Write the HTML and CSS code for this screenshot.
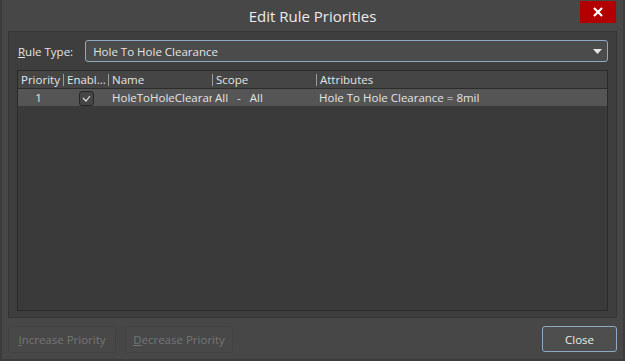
FILE: index.html
```html
<!DOCTYPE html>
<html lang="en">
<head>
  <meta charset="UTF-8">
  <title>Edit Rule Priorities</title>
  <link rel="stylesheet" href="styles.css">
</head>
<body>
  <div class="window">
    <div class="titlebar">
      <span></span>
      <div class="title">Edit Rule Priorities</div>
      <div class="close-x">
        <svg width="10" height="10" viewBox="0 0 10 10"><path d="M1 1 L9 9 M9 1 L1 9" stroke="#fff" stroke-width="2.2"/></svg>
      </div>
    </div>

    <div class="panel">
      <div class="rule-row">
        <label><u>R</u>ule Type:</label>
        <div class="select">
          <span>Hole To Hole Clearance</span>
          <svg width="9" height="5" viewBox="0 0 9 5"><path d="M0 0 H9 L4.5 5 Z" fill="#e8e8e8"/></svg>
        </div>
      </div>

      <div class="grid">
        <div class="row head">
          <div class="cell c-pri">Priority</div>
          <div class="cell c-en sep">Enabl...</div>
          <div class="cell c-name sep">Name</div>
          <div class="cell c-scope sep">Scope</div>
          <div class="cell c-attr sep">Attributes</div>
        </div>
        <div class="row sel">
          <div class="cell c-pri num">1</div>
          <div class="cell c-en">
            <span class="check">
              <svg width="9" height="7" viewBox="0 0 9 7"><path d="M1 3 L4 6 L8 1" stroke="#e0e0e0" stroke-width="1.2" fill="none"/></svg>
            </span>
          </div>
          <div class="cell c-name clip">HoleToHoleClearance</div>
          <div class="cell c-scope">All&nbsp;&nbsp;&nbsp;-&nbsp;&nbsp;&nbsp;All</div>
          <div class="cell c-attr">Hole To Hole Clearance = 8mil</div>
        </div>
      </div>
    </div>

    <div class="footer">
      <button class="btn disabled"><u>I</u>ncrease Priority</button>
      <button class="btn disabled"><u>D</u>ecrease Priority</button>
      <span class="spacer"></span>
      <button class="btn primary">Close</button>
    </div>
  </div>
</body>
</html>
```

FILE: styles.css
```css
* {
  margin: 0;
  padding: 0;
  box-sizing: border-box;
}

body {
  font-family: 'Open Sans', 'Noto Sans', sans-serif;
  font-size: 11.5px;
  color: #e4e4e4;
  background: #3a3a3a;
}

.window {
  width: 625px;
  height: 361px;
  background: #474747;
  border: 2px solid #3c3c3c;
  border-top: none;
  display: flex;
  flex-direction: column;
}

.titlebar {
  height: 31px;
  display: grid;
  grid-template-columns: 1fr auto 1fr;
  align-items: start;
}

.title {
  font-size: 15px;
  color: #ececec;
  padding-top: 6px;
}

.close-x {
  justify-self: end;
  width: 36px;
  height: 22px;
  margin-top: 1px;
  margin-right: 7px;
  background: #b20000;
  display: flex;
  align-items: center;
  justify-content: center;
}

.panel {
  margin: 0 6px;
  height: 287px;
  background: #3e3e3e;
  border: 1px solid #353535;
  padding: 8px 8px 6px 8px;
  display: flex;
  flex-direction: column;
}

.rule-row {
  display: flex;
  align-items: center;
  height: 22px;
  gap: 12px;
}

.rule-row label {
  padding-left: 1px;
}

.select {
  flex: 1;
  height: 22px;
  border: 1px solid #8fa9c2;
  border-radius: 3px;
  background: #4b4b4b;
  display: flex;
  align-items: center;
  justify-content: space-between;
  padding: 0 5px 0 7px;
}

.grid {
  flex: 1;
  margin-top: 8px;
  background: #3a3a3a;
  border: 1px solid #2a2a2a;
}

.row {
  display: flex;
  height: 17px;
  align-items: center;
}

.head {
  background: #454545;
  border-bottom: 1px solid #2c2c2c;
  height: 18px;
}

.sel {
  background: #555555;
  height: 17px;
}

.cell {
  padding-left: 3px;
  white-space: nowrap;
  overflow: hidden;
  line-height: 17px;
}

.sep {
  display: flex;
  align-items: center;
  padding-left: 0;
}

.sep::before {
  content: "";
  flex: none;
  width: 1px;
  height: 12px;
  background: #9a9a9a;
  margin-right: 3px;
}

.c-pri { width: 45px; flex: none; }
.c-en { width: 45px; flex: none; }
.c-name { width: 104px; flex: none; }
.c-scope { width: 104px; flex: none; }
.c-attr { flex: 1; }

.num {
  text-align: center;
  padding-left: 0;
  padding-right: 4px;
}

.clip {
  text-overflow: clip;
  padding-left: 4px;
}

.c-en .check {
  display: flex;
  align-items: center;
  justify-content: center;
  width: 15px;
  height: 15px;
  margin: 1px 0 0 13px;
  border: 1px solid #262626;
  border-radius: 3px;
  background: #454545;
}

.footer {
  display: flex;
  gap: 9px;
  padding: 8px 6px 0 6px;
}

.spacer {
  flex: 1;
}

.btn {
  font-family: inherit;
  font-size: 11.5px;
  white-space: nowrap;
  height: 27px;
  border-radius: 3px;
  background: #484848;
  border: 1px solid #424242;
  color: #757575;
  padding: 0 6px;
}

.btn.disabled {
  width: 108px;
}

.btn.primary {
  width: 75px;
  height: 26px;
  color: #ececec;
  background: #4e4e4e;
  border: 1px solid #8fa9c2;
}
```
